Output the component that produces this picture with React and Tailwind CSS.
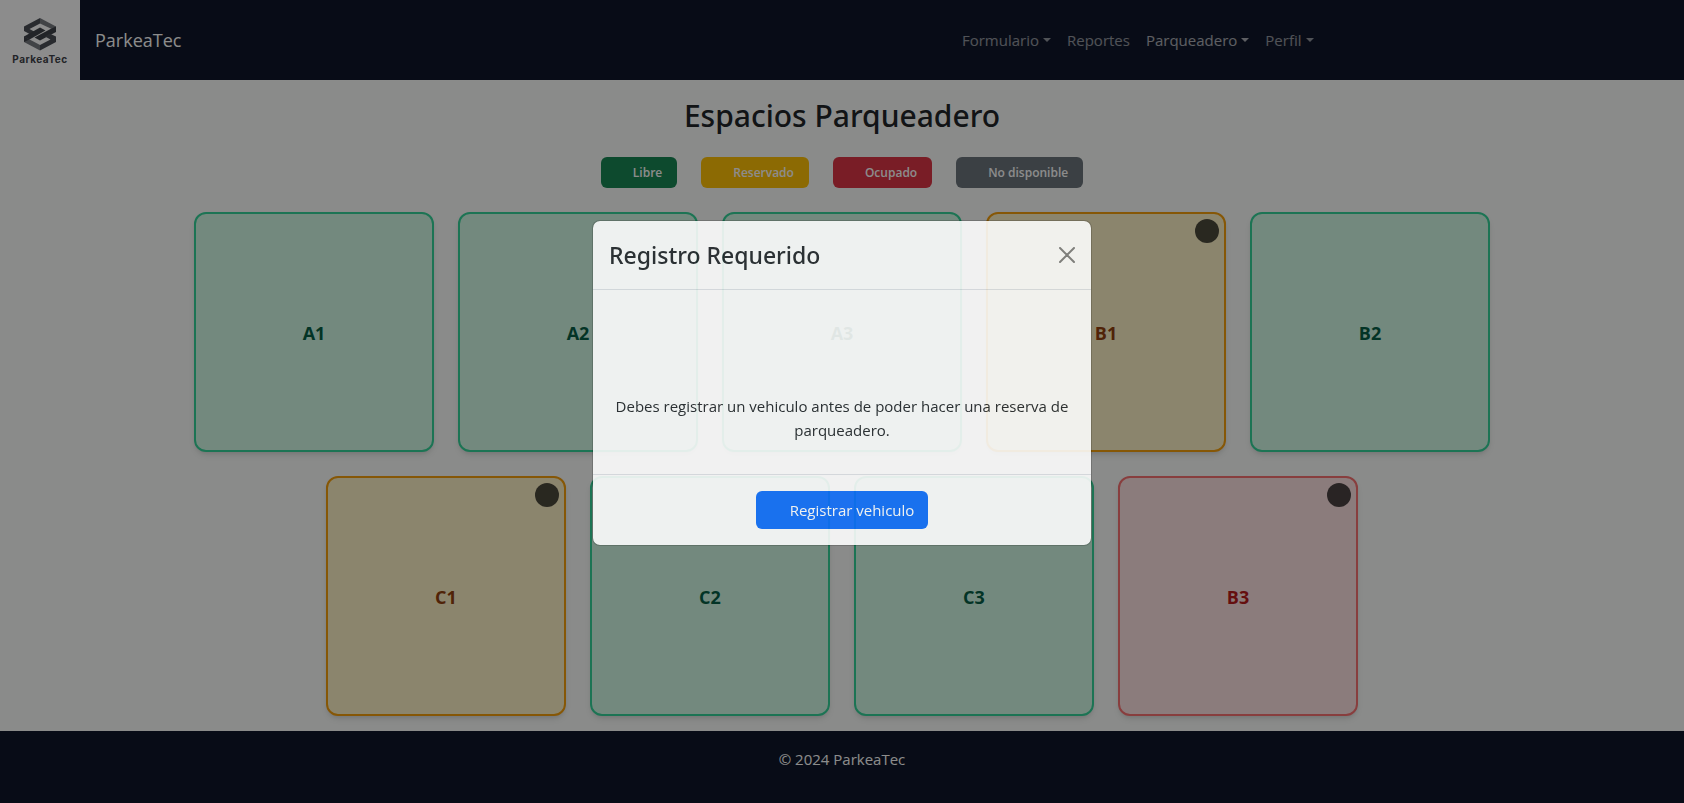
import React from "react";

const navItems = [
  { label: "Formulario", menu: true },
  { label: "Reportes" },
  { label: "Parqueadero", menu: true, active: true },
  { label: "Perfil", menu: true },
];

const legend = [
  { label: "Libre", color: "bg-[#198754]" },
  { label: "Reservado", color: "bg-[#ffc107]" },
  { label: "Ocupado", color: "bg-[#dc3545]" },
  { label: "No disponible", color: "bg-[#6c757d]" },
];

const spaceStyles = {
  free: "border-[#34d399] bg-[#d1fae5] text-[#065f46]",
  reserved: "border-[#f59e0b] bg-[#fef3c7] text-[#92400e]",
  taken: "border-[#f87171] bg-[#fee2e2] text-[#b91c1c]",
};

const spaces = [
  { id: "A1", status: "free" },
  { id: "A2", status: "free" },
  { id: "A3", status: "free" },
  { id: "B1", status: "reserved" },
  { id: "B2", status: "free" },
  { id: "C1", status: "reserved" },
  { id: "C2", status: "free" },
  { id: "C3", status: "free" },
  { id: "B3", status: "taken" },
];

function Logo() {
  return (
    <span className="flex h-20 w-20 flex-col items-center bg-white pt-[17px]">
      <svg viewBox="0 0 34 34" className="h-[34px] w-[34px]" aria-hidden="true">
        <path d="M1 9.500 17 1v5.500L6.500 12 12 15 7.500 17.500 1 14z" fill="#4b4f56" />
        <path d="M17 1 33 9.500V14L17 6.500z" fill="#777a80" />
        <path d="M33 9.500V15L17 23.500 11.500 20.500 27.500 12z" fill="#3f4349" />
        <path d="M1 19.500 17 10.500 22.500 13.500 6.500 22.500 1 25z" fill="#3f4349" />
        <path d="M33 19.500V25L17 33.500V28L27.500 22.500 22 19.500 26.500 16.500z" fill="#4b4f56" />
        <path d="M1 25V19.500L17 28v5.500z" fill="#777a80" />
        <path d="M1 19.500 6.500 22.500 1 25z" fill="#3f4349" />
      </svg>
      <span className="font-[Inter] text-[10px] leading-4 font-bold tracking-wider text-[#3f4349]">ParkeaTec</span>
    </span>
  );
}

function Header() {
  return (
    <header className="flex h-20 items-center bg-[#0f172a] pr-[22%]">
      <a href="#inicio" className="flex items-center gap-[15px] text-lg text-white">
        <Logo />
        ParkeaTec
      </a>
      <nav className="ml-auto flex gap-4">
        {navItems.map(({ label, menu, active }) =>
          menu ? (
            <button
              key={label}
              type="button"
              className={`flex items-center gap-1 text-[15px] leading-6 ${active ? "text-white/65" : "text-white/55"}`}
            >
              {label}
              <span className="border-x-4 border-t-4 border-x-transparent" />
            </button>
          ) : (
            <a key={label} href="#reportes" className="text-[15px] leading-6 text-white/55">
              {label}
            </a>
          ),
        )}
      </nav>
    </header>
  );
}

function Space({ id, status }) {
  return (
    <button
      type="button"
      className={`relative size-60 rounded-xl border-2 pt-0.5 text-lg font-bold shadow-md ${spaceStyles[status]}`}
    >
      {id}
      {status !== "free" && <span className="absolute top-[5px] right-[5px] size-6 rounded-full bg-black/70" />}
    </button>
  );
}

function RegisterDialog() {
  return (
    <div className="fixed inset-0 flex items-start justify-center bg-black/45 pt-[220px]">
      <section
        role="dialog"
        aria-modal="true"
        aria-labelledby="dialog-title"
        className="w-[500px] rounded-lg border border-black/20 bg-white bg-clip-padding text-[#212529] opacity-88"
      >
        <div className="flex items-center justify-between border-b border-[#dee2e6] py-4 pr-2 pl-4">
          <h2 id="dialog-title" className="font-['Noto_Sans',sans-serif] text-[23px] leading-9 font-medium">
            Registro Requerido
          </h2>
          <button type="button" aria-label="Cerrar" className="p-2 opacity-50">
            <svg viewBox="0 0 16 16" className="size-4" stroke="#000" strokeWidth="2" strokeLinecap="round">
              <path d="M1 1l14 14M15 1L1 15" />
            </svg>
          </button>
        </div>
        <p className="px-4 pt-[104px] pb-8 text-center text-[15px] leading-6">
          Debes registrar un vehiculo antes de poder hacer una reserva de parqueadero.
        </p>
        <div className="flex justify-center border-t border-[#dee2e6] p-4">
          <button
            type="button"
            className="rounded-md bg-[#0d6efd] py-[7px] pr-[14px] pl-[34px] text-[15px] leading-6 text-white"
          >
            Registrar vehiculo
          </button>
        </div>
      </section>
    </div>
  );
}

export default function App() {
  return (
    <div className="flex min-h-screen flex-col bg-[#fbfdfb] font-['Open_Sans',sans-serif] text-[#212529]">
      <Header />
      <main className="flex flex-1 flex-col items-center gap-6 pt-4 pb-[15px]">
        <h1 className="font-['Noto_Sans',sans-serif] text-[30px] leading-10 font-medium">Espacios Parqueadero</h1>
        <ul className="-mt-[3px] flex gap-6">
          {legend.map(({ label, color }) => (
            <li
              key={label}
              className={`rounded-md py-2 pr-[15px] pl-8 text-xs leading-[15px] font-semibold text-white ${color}`}
            >
              {label}
            </li>
          ))}
        </ul>
        <div className="flex max-w-[1320px] flex-wrap justify-center gap-6">
          {spaces.map((space) => (
            <Space key={space.id} {...space} />
          ))}
        </div>
      </main>
      <footer className="h-[72px] bg-[#0f172a] pt-4 text-center text-[15px] leading-6 text-white">
        © 2024 ParkeaTec
      </footer>
      <RegisterDialog />
    </div>
  );
}
